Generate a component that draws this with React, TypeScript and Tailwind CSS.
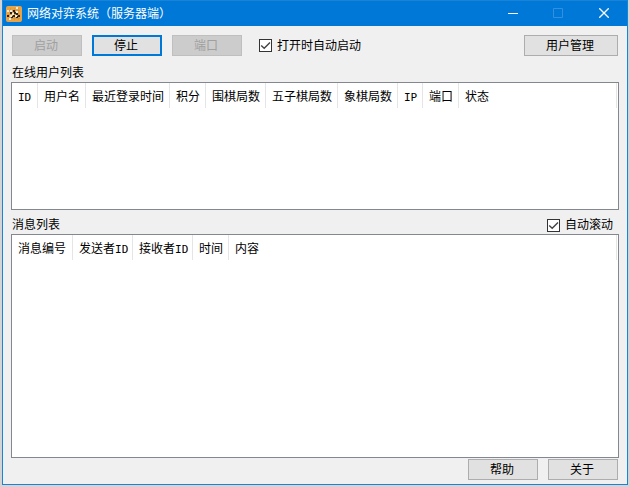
import { useState } from "react";
import type { ReactNode } from "react";

type Column = { label: ReactNode; width?: string };

function Latin({ children }: { children: string }) {
  return <span className='font-["DejaVu_Sans_Mono",monospace] text-[11px]/3'>{children}</span>;
}

const userColumns: Column[] = [
  { label: <Latin>ID</Latin>, width: "w-[26px]" },
  { label: "用户名", width: "w-12" },
  { label: "最近登录时间", width: "w-[84px]" },
  { label: "积分", width: "w-9" },
  { label: "围棋局数", width: "w-15" },
  { label: "五子棋局数", width: "w-18" },
  { label: "象棋局数", width: "w-15" },
  { label: <Latin>IP</Latin>, width: "w-[25px]" },
  { label: "端口", width: "w-9" },
  { label: "状态" },
];

const messageColumns: Column[] = [
  { label: "消息编号", width: "w-[61px]" },
  { label: <>发送者<Latin>ID</Latin></>, width: "w-15" },
  { label: <>接收者<Latin>ID</Latin></>, width: "w-15" },
  { label: "时间", width: "w-9" },
  { label: "内容" },
];

function ListView({ label, columns, className }: { label: string; columns: Column[]; className: string }) {
  return (
    <div className={`border border-[#828790] bg-white pr-px ${className}`}>
      <table aria-labelledby={label} className="w-full table-fixed border-separate border-spacing-0">
        <thead>
          <tr>
            {columns.map((col, i) => (
              <th
                key={i}
                scope="col"
                className={`h-[25px] border-r border-[#e5e5e5] p-0 pl-1.5 text-left font-normal whitespace-nowrap ${col.width ?? ""}`}
              >
                {col.label}
              </th>
            ))}
          </tr>
        </thead>
        <tbody />
      </table>
    </div>
  );
}

function PushButton({ children, active, wide, disabled }: { children: string; active?: boolean; wide?: boolean; disabled?: boolean }) {
  return (
    <button
      type="button"
      disabled={disabled}
      className={`flex h-[21px] items-center justify-center bg-[#e1e1e1] pr-0.5 pb-0.5 leading-4 disabled:border-[#bfbfbf] disabled:bg-[#cccccc] disabled:text-[#a0a0a0] ${
        active ? "border-2 border-[#0078d7]" : "border border-[#adadad]"
      } ${wide ? "w-[94px]" : "w-[70px]"}`}
    >
      {children}
    </button>
  );
}

function CheckBox({ id, label }: { id: string; label: string }) {
  const [checked, setChecked] = useState(true);
  return (
    <label htmlFor={id} className="flex items-center gap-[5px]">
      <span className="grid size-[13px]">
        <input
          id={id}
          type="checkbox"
          checked={checked}
          onChange={(e) => setChecked(e.target.checked)}
          className="col-start-1 row-start-1 size-[13px] appearance-none border border-[#333333] bg-white"
        />
        {checked && (
          <svg viewBox="0 0 13 13" fill="none" stroke="#444" strokeWidth="1.4" className="pointer-events-none col-start-1 row-start-1 size-[13px]">
            <path d="M2.2 6.4 L5.2 9.2 L11 3.4" />
          </svg>
        )}
      </span>
      <span className="pb-0.5">{label}</span>
    </label>
  );
}

function GoIcon() {
  const black = [[7, 4], [4, 6], [8, 6], [10, 7], [1, 9], [7, 9], [12, 9], [5, 10], [10, 10]];
  const white = [[10, 1], [1, 4], [4, 4], [6, 7], [10, 5], [4, 9], [9, 9], [3, 12]];
  return (
    <svg viewBox="0 0 16 16" className="size-4" aria-hidden="true">
      <rect width="16" height="16" rx="2" fill="#e8a347" />
      <path d="M2 4.5h12M2 8.5h12M2 12.5h12M4.5 2v12M8.5 2v12M12.5 2v12" stroke="#cf8c38" strokeWidth="0.5" />
      {black.map(([x, y]) => (
        <rect key={`b${x}-${y}`} x={x} y={y} width="2" height="2" fill="#2b2520" />
      ))}
      {white.map(([x, y]) => (
        <rect key={`w${x}-${y}`} x={x} y={y} width="2" height="2" fill="#f4ede4" />
      ))}
    </svg>
  );
}

function TitleBar() {
  return (
    <header className="flex h-[26px] shrink-0 items-center border-t border-[#1883d7] bg-[#0078d7] pl-[3px] text-white">
      <GoIcon />
      <h1 className="ml-[5px] pb-0.5">网络对弈系统（服务器端）</h1>
      <div className="ml-auto flex h-full items-center">
        <button type="button" aria-label="最小化" className="flex h-full w-[46px] items-center justify-center">
          <svg viewBox="0 0 10 10" className="size-2.5" stroke="white" fill="none">
            <path d="M0 4.5h10" />
          </svg>
        </button>
        <button type="button" aria-label="最大化" disabled className="flex h-full w-11 items-center justify-center pb-px">
          <svg viewBox="0 0 10 10" className="size-2.5" stroke="#338fe0" fill="none">
            <path d="M0.5 0.5h9v9h-9z" />
          </svg>
        </button>
        <button type="button" aria-label="关闭" className="flex h-full w-[47px] items-center justify-center pb-px">
          <svg viewBox="0 0 10 10" className="size-2.5" stroke="white" strokeWidth="1.3" fill="none">
            <path d="M0.3 0.3l9.4 9.4M9.7 0.3l-9.4 9.4" />
          </svg>
        </button>
      </div>
    </header>
  );
}

export default function App() {
  return (
    <div className="flex min-h-screen flex-col bg-[#d4d4d4] px-0.5 pb-0.5 text-xs/4 text-black [font-family:'Noto_Sans_CJK_SC',sans-serif]">
      <div className="flex flex-1 flex-col border border-t-0 border-[#1883d7] bg-[#f0f0f0]">
        <TitleBar />
        <main className="flex flex-1 flex-col px-2 pb-1">
          <div className="flex items-center pt-[9px] pr-px pl-px">
            <div className="flex gap-2.5">
              <PushButton disabled>启动</PushButton>
              <PushButton active>停止</PushButton>
              <PushButton disabled>端口</PushButton>
            </div>
            <div className="mr-auto ml-[17px]">
              <CheckBox id="auto-start" label="打开时自动启动" />
            </div>
            <PushButton wide>用户管理</PushButton>
          </div>

          <h2 id="users-label" className="mt-2 mb-0.5 ml-px">在线用户列表</h2>
          <ListView label="users-label" columns={userColumns} className="h-32" />

          <div className="mt-1.5 flex items-center justify-between pr-1.5 pl-px">
            <h2 id="messages-label" className="pb-0.5">消息列表</h2>
            <CheckBox id="auto-scroll" label="自动滚动" />
          </div>
          <ListView label="messages-label" columns={messageColumns} className="flex-1" />

          <div className="mt-px flex justify-end gap-2.5 pr-px">
            <PushButton>帮助</PushButton>
            <PushButton>关于</PushButton>
          </div>
        </main>
      </div>
    </div>
  );
}
